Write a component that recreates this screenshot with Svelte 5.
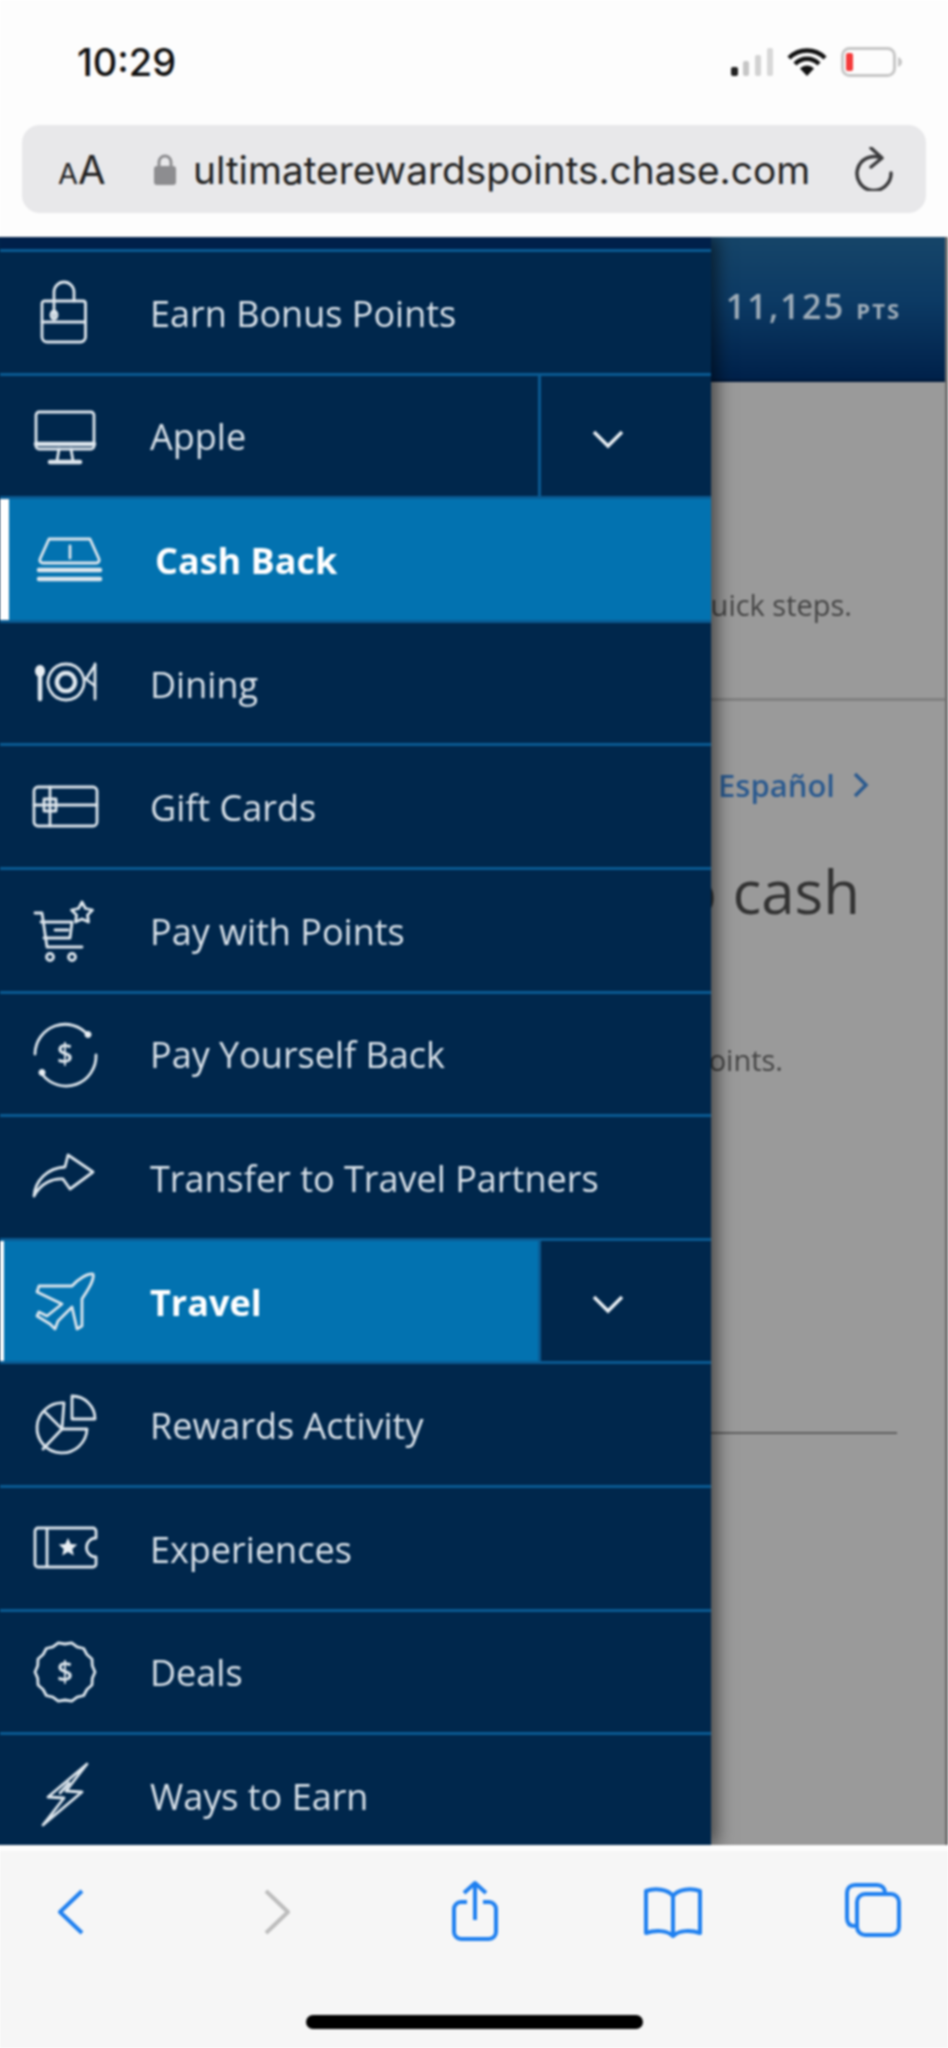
<script>
  // scalloped badge outline for the Deals icon
  function scallop(cx, cy, r, n) {
    let d = '';
    for (let i = 0; i <= n * 2; i++) {
      const a = (i / (n * 2)) * Math.PI * 2;
      const rad = i % 2 ? r - 2 : r;
      const x = (cx + Math.cos(a) * rad).toFixed(1);
      const y = (cy + Math.sin(a) * rad).toFixed(1);
      d += (i === 0 ? 'M' : 'L') + x + ' ' + y;
    }
    return d + 'Z';
  }

  const items = [
    { label: 'Earn Bonus Points', paths: ['M12 21h38a2.500 2.500 0 0 1 2.500 2.500V57a5 5 0 0 1-5 5H14a5 5 0 0 1-5-5V23.500A2.500 2.500 0 0 1 12 21Z', 'M21 36V12a10 10 0 0 1 20 0v9', 'M18 35a3 4 0 1 0 6 0a3 4 0 1 0-6 0', 'M9 42h43'] },
    { label: 'Apple', expand: true, paths: ['M6 8h52a3 3 0 0 1 3 3v31a3 3 0 0 1-3 3H6a3 3 0 0 1-3-3V11a3 3 0 0 1 3-3Z', 'M26 45l-2 12M38 45l2 12'], thick: ['M3 40h58', 'M17 58h30'] },
    { label: 'Cash Back', active: true, paths: ['M11 12h41l9 20a3 3 0 0 1-3 4H5a3 3 0 0 1-3-4Z', 'M32 19v12'], thick: ['M1 43h61', 'M1 52h61'] },
    { label: 'Dining', paths: ['M62 13v35', 'M62 14L53 28L62 35', 'M33 13a18 18 0 1 0 0.010 0Z'], thick: ['M7 24v24', 'M33 22a9 9 0 1 0 0.010 0Z'], fills: ['M7 14a5 6 0 1 0 0.010 0Z'] },
    { label: 'Gift Cards', paths: ['M5 12h55a4 4 0 0 1 4 4v31a4 4 0 0 1-4 4H5a4 4 0 0 1-4-4V16a4 4 0 0 1 4-4Z', 'M1 30h63', 'M17 12v39', 'M11 24h12v12H11Z'] },
    { label: 'Pay with Points', paths: ['M2 15h7l5 34h35', 'M8 24h31l-2 16H11', 'M22 32h13', 'M17 55.500a3.500 3.500 0 1 0 0.010 0Z', 'M39 55.500a3.500 3.500 0 1 0 0.010 0Z', 'M49 4l3.500 6.500 7 1.500-5 5 1 7-6.500-3-6.500 3 1-7-5-5 7-1.500Z'] },
    { label: 'Pay Yourself Back', dollar: true, paths: ['M2 32A30 30 0 0 1 55 13', 'M9 52A30 30 0 0 0 63 33'], fills: ['M55 9a3.500 3.500 0 1 0 0.010 0Z', 'M9 47a3.500 3.500 0 1 0 0.010 0Z'] },
    { label: 'Transfer to Travel Partners', paths: ['M1 51C2 36 14 23 32 22L35 10L60 27L37 44L30 34C20 33 8 38 1 51Z'] },
    { label: 'Travel', active: true, slim: true, expand: true, paths: ['M60 5C55 4 45 10 39 17L6 17L4 23L29 35L14 47L6 43L4 47L17 55L22 60L25 52L39 38L44 60L49 57L49 30C54 22 62 11 60 5Z'] },
    { label: 'Rewards Activity', paths: ['M39 3A23 23 0 0 1 62 26H39Z', 'M31 10A25 25 0 1 0 54 36H29Z', 'M29 36L12 19', 'M29 36L10 56'] },
    { label: 'Experiences', paths: ['M5 12h55a3 3 0 0 1 3 3v7a9 9 0 0 0 0 19v7a3 3 0 0 1-3 3H5a3 3 0 0 1-3-3V15a3 3 0 0 1 3-3Z', 'M14 14v36'], fills: ['M35 22l2.800 6 6.500 .5-5 4.500 1.500 6.500-5.800-3.500-5.800 3.500 1.500-6.500-5-4.500 6.500-.5Z'] },
    { label: 'Deals', dollar: true, paths: [scallop(32, 32, 30, 14)] },
    { label: 'Ways to Earn', paths: ['M54 1L15 34L31 35L10 62L49 29L33 28Z', 'M27 30L36 20'] }
  ];
</script>

<div class="phone">
  <header class="chrome">
    <div class="status">
      <span class="time">10:29</span>
      <div class="status-icons">
        <svg class="signal" viewBox="0 0 42 28" width="42" height="28">
          <rect x="0" y="19" width="7" height="9" rx="2" fill="#222" />
          <rect x="12" y="13" width="6" height="15" rx="2" fill="#c6c6c6" />
          <rect x="24" y="7" width="6" height="21" rx="2" fill="#d2d2d2" />
          <rect x="36" y="0" width="6" height="28" rx="2" fill="#d8d8d8" />
        </svg>
        <svg class="wifi" viewBox="0 0 40 28" width="40" height="28">
          <path d="M2 10C12 0 28 0 38 10M8 16C15 9 25 9 32 16" fill="none" stroke="#111" stroke-width="4.500" />
          <path d="M13 20.500C17 16.500 23 16.500 27 20.500L20 28Z" fill="#111" />
        </svg>
        <svg class="battery" viewBox="0 0 62 30" width="62" height="30">
          <rect x="1.500" y="1.500" width="52" height="27" rx="7" fill="none" stroke="#c6c6c6" stroke-width="3" />
          <rect x="5" y="6" width="7" height="18" rx="2" fill="#f43a3a" />
          <path d="M57 10c3 1 4 3 4 5s-1 4-4 5Z" fill="#c6c6c6" />
        </svg>
      </div>
    </div>
    <div class="url-bar">
      <span class="aa"><small>A</small>A</span>
      <svg class="lock" viewBox="0 0 22 32" width="22" height="32">
        <path d="M5 15V9a6 6 0 0 1 12 0v6" fill="none" stroke="#8d8d90" stroke-width="3" />
        <rect x="0" y="13" width="22" height="19" rx="3" fill="#8d8d90" />
      </svg>
      <span class="url">ultimaterewardspoints.chase.com</span>
      <svg class="reload" viewBox="0 0 40 44" width="40" height="44">
        <path d="M27 11A17 17 0 1 0 37 26" fill="none" stroke="#3a3a3c" stroke-width="3.500" stroke-linecap="round" />
        <path d="M17 1l11 10-11 9" fill="none" stroke="#3a3a3c" stroke-width="3.500" stroke-linecap="round" stroke-linejoin="round" />
      </svg>
    </div>
  </header>

  <main class="page">
    <div class="page-top">
      <span class="pts">11,125 <small>PTS</small></span>
    </div>
    <div class="content">
      <p class="intro">quick steps.</p>
      <hr class="rule" />
      <div class="lang">
        <span>Español</span>
        <svg viewBox="0 0 16 26" width="16" height="26"><path d="M2 2l11 11L2 24" fill="none" stroke="#2b5a8f" stroke-width="3.500" /></svg>
      </div>
      <h1>to cash</h1>
      <p class="sub">points.</p>
      <hr class="rule short" />
    </div>

    <nav class="drawer">
      {#each items as item}
        <div class="row" class:active={item.active && !item.expand} class:expandable={item.expand}>
          <div class="link" class:active={item.active} class:slim={item.slim}>
            <svg class="icon" viewBox="0 0 64 64" width="64" height="64">
              {#each item.paths as d}<path {d} />{/each}
              {#each item.thick ?? [] as d}<path class="thick" {d} />{/each}
              {#each item.fills ?? [] as d}<path class="solid" {d} />{/each}
              {#if item.dollar}<text x="32" y="42" text-anchor="middle">$</text>{/if}
            </svg>
            <span class="label">{item.label}</span>
          </div>
          {#if item.expand}
            <div class="toggle">
              <svg viewBox="0 0 34 20" width="34" height="20"><path d="M3 3l14 14L31 3" fill="none" stroke="#e8eef3" stroke-width="3.500" /></svg>
            </div>
          {/if}
        </div>
      {/each}
    </nav>
  </main>

  <footer class="toolbar">
    <div class="tools">
      <svg viewBox="0 0 60 60" width="60" height="60"><path d="M41 9L19 30l22 21" class="tool" /></svg>
      <svg viewBox="0 0 60 60" width="60" height="60"><path d="M19 9l22 21-22 21" class="tool off" /></svg>
      <svg viewBox="0 0 60 64" width="60" height="64"><path class="tool" d="M22 22h-6a7 7 0 0 0-7 7v23a7 7 0 0 0 7 7h28a7 7 0 0 0 7-7V29a7 7 0 0 0-7-7h-6M30 40V3M19 13L30 3l11 10" /></svg>
      <svg viewBox="0 0 60 52" width="60" height="52"><path class="tool" d="M30 10C25 3 12 2 3 5v42c9-3 21-3 27 3c6-6 18-6 27-3V5C48 2 35 3 30 10ZM30 10V48" /></svg>
      <svg viewBox="0 0 60 60" width="60" height="60"><path class="tool" d="M12 44c-6 0-8-3-8-8V11c0-5 3-8 8-8h22c5 0 8 3 8 8" /><rect class="tool" x="14" y="12" width="42" height="41" rx="8" /></svg>
    </div>
    <div class="home-bar"></div>
  </footer>
</div>

<style>
  :global(body) {
    margin: 0;
    background: #fff;
    overflow: hidden;
  }

  .phone {
    display: flex;
    flex-direction: column;
    width: 948px;
    height: 2048px;
    font-family: "Open Sans", sans-serif;
    filter: blur(0.8px);
  }

  .chrome {
    height: 237px;
    box-sizing: border-box;
    background: #fdfdfd;
    padding-top: 40px;
  }

  .status {
    display: flex;
    justify-content: space-between;
    align-items: center;
    height: 44px;
    padding: 0 45px 0 77px;
  }

  .time {
    font-family: Inter, sans-serif;
    font-size: 38px;
    font-weight: 500;
    color: #111;
  }

  .status-icons {
    display: flex;
    align-items: center;
    gap: 14px;
  }

  .url-bar {
    display: flex;
    align-items: center;
    height: 88px;
    margin: 41px 22px 0;
    padding: 0 32px 0 36px;
    background: #e8e8ea;
    border-radius: 18px;
  }

  .aa {
    font-family: Inter, sans-serif;
    font-size: 40px;
    color: #222;
    width: 96px;
    flex-shrink: 0;
  }

  .aa small {
    font-size: 29px;
  }

  .url {
    flex: 1;
    margin-left: 17px;
    font-family: Inter, sans-serif;
    font-size: 38.8px;
    color: #222;
    white-space: nowrap;
  }

  .page {
    position: relative;
    flex: 1;
    display: flex;
    flex-direction: column;
    background: #9a9a9a;
    border-right: 3px solid #6f6f6f;
    /* keeps the blur from fading the drawer's left edge */
    box-shadow: -6px 0 0 #00274c;
    overflow: hidden;
  }

  .page-top {
    flex-shrink: 0;
    display: flex;
    justify-content: flex-end;
    height: 145px;
    box-sizing: border-box;
    padding: 46px 47px 0 0;
    background: linear-gradient(#164569, #0c3a64 45%, #00214a);
    border-bottom: 3px solid #001a3c;
    margin-right: -3px;
  }

  .pts {
    font-size: 34px;
    font-weight: 600;
    letter-spacing: 2.200px;
    color: #9fadb9;
    white-space: nowrap;
  }

  .pts small {
    font-size: 22px;
    font-weight: 700;
    letter-spacing: 2px;
  }

  .content {
    display: flex;
    flex-direction: column;
    align-items: flex-end;
    text-align: right;
    white-space: nowrap;
  }

  .intro {
    margin: 203px 93px 0 0;
    font-size: 29px;
    line-height: 40px;
    color: #444;
  }

  .rule {
    align-self: stretch;
    margin: 73px 0 0;
    border: 0;
    border-top: 3px solid #808080;
  }

  .rule.short {
    margin: 352px 48px 0 0;
    border-top: 2px solid #5f5f5f;
  }

  .lang {
    display: flex;
    align-items: center;
    gap: 18px;
    margin: 64px 76px 0 0;
    font-size: 31px;
    font-weight: 600;
    line-height: 40px;
    color: #2b5a8f;
  }

  h1 {
    margin: 48px 85px 0 0;
    font-size: 60px;
    font-weight: 400;
    line-height: 76px;
    color: #333;
  }

  .sub {
    margin: 111px 162px 0 0;
    font-size: 29px;
    line-height: 40px;
    color: #444;
  }

  .drawer {
    position: absolute;
    inset: 0 auto 0 0;
    width: 711px;
    box-sizing: border-box;
    padding-top: 12px;
    background: linear-gradient(#00204a 12px, #00274c 12px);
    box-shadow: 6px 0 16px rgba(0, 0, 0, .55);
    overflow: hidden;
  }

  .row {
    display: flex;
    height: 123.6px;
    box-sizing: border-box;
    border-top: 3px solid #0a5a92;
  }

  .link {
    flex: 1;
    display: flex;
    align-items: center;
    gap: 53px;
    padding-left: 33px;
    color: #d8e1e9;
    font-size: 36px;
  }

  .link.active {
    padding-left: 29px;
    background: #0272b0;
    border-left: 4px solid #fff;
    color: #fff;
    font-weight: 700;
  }

  .row.active .link {
    padding-left: 29px;
    border-left-width: 9px;
  }

  .label {
    white-space: nowrap;
    margin-top: 2px;
  }

  .toggle {
    width: 173px;
    flex-shrink: 0;
    box-sizing: border-box;
    display: flex;
    align-items: center;
    padding: 6px 0 0 50px;
    border-left: 3px solid #0a5a92;
  }

  .icon {
    flex-shrink: 0;
    overflow: visible;
    fill: none;
    stroke: #dde6ed;
    stroke-width: 2.8;
    stroke-linejoin: round;
    stroke-linecap: round;
  }

  .icon .thick {
    stroke-width: 4.5;
  }

  .icon .solid {
    fill: #e8eef3;
    stroke: none;
  }

  .icon text {
    fill: #dde6ed;
    stroke: none;
    font-family: "Open Sans", sans-serif;
    font-size: 28px;
    font-weight: 600;
  }

  .toolbar {
    height: 203px;
    box-sizing: border-box;
    background: #f6f6f6;
    border-top: 6px solid #fdfdfd;
    display: flex;
    flex-direction: column;
  }

  .tools {
    display: grid;
    grid-template-columns: 206px 198px 198px 200px 60px;
    align-items: center;
    height: 90px;
    margin-top: 16px;
    padding-left: 41px;
  }

  .tool {
    fill: none;
    stroke: #1f80f0;
    stroke-width: 4;
    stroke-linejoin: round;
  }

  .tool.off {
    stroke: #bdbdbd;
  }

  .home-bar {
    width: 337px;
    height: 14px;
    margin: 58px auto 0;
    border-radius: 7px;
    background: #000;
  }
</style>
